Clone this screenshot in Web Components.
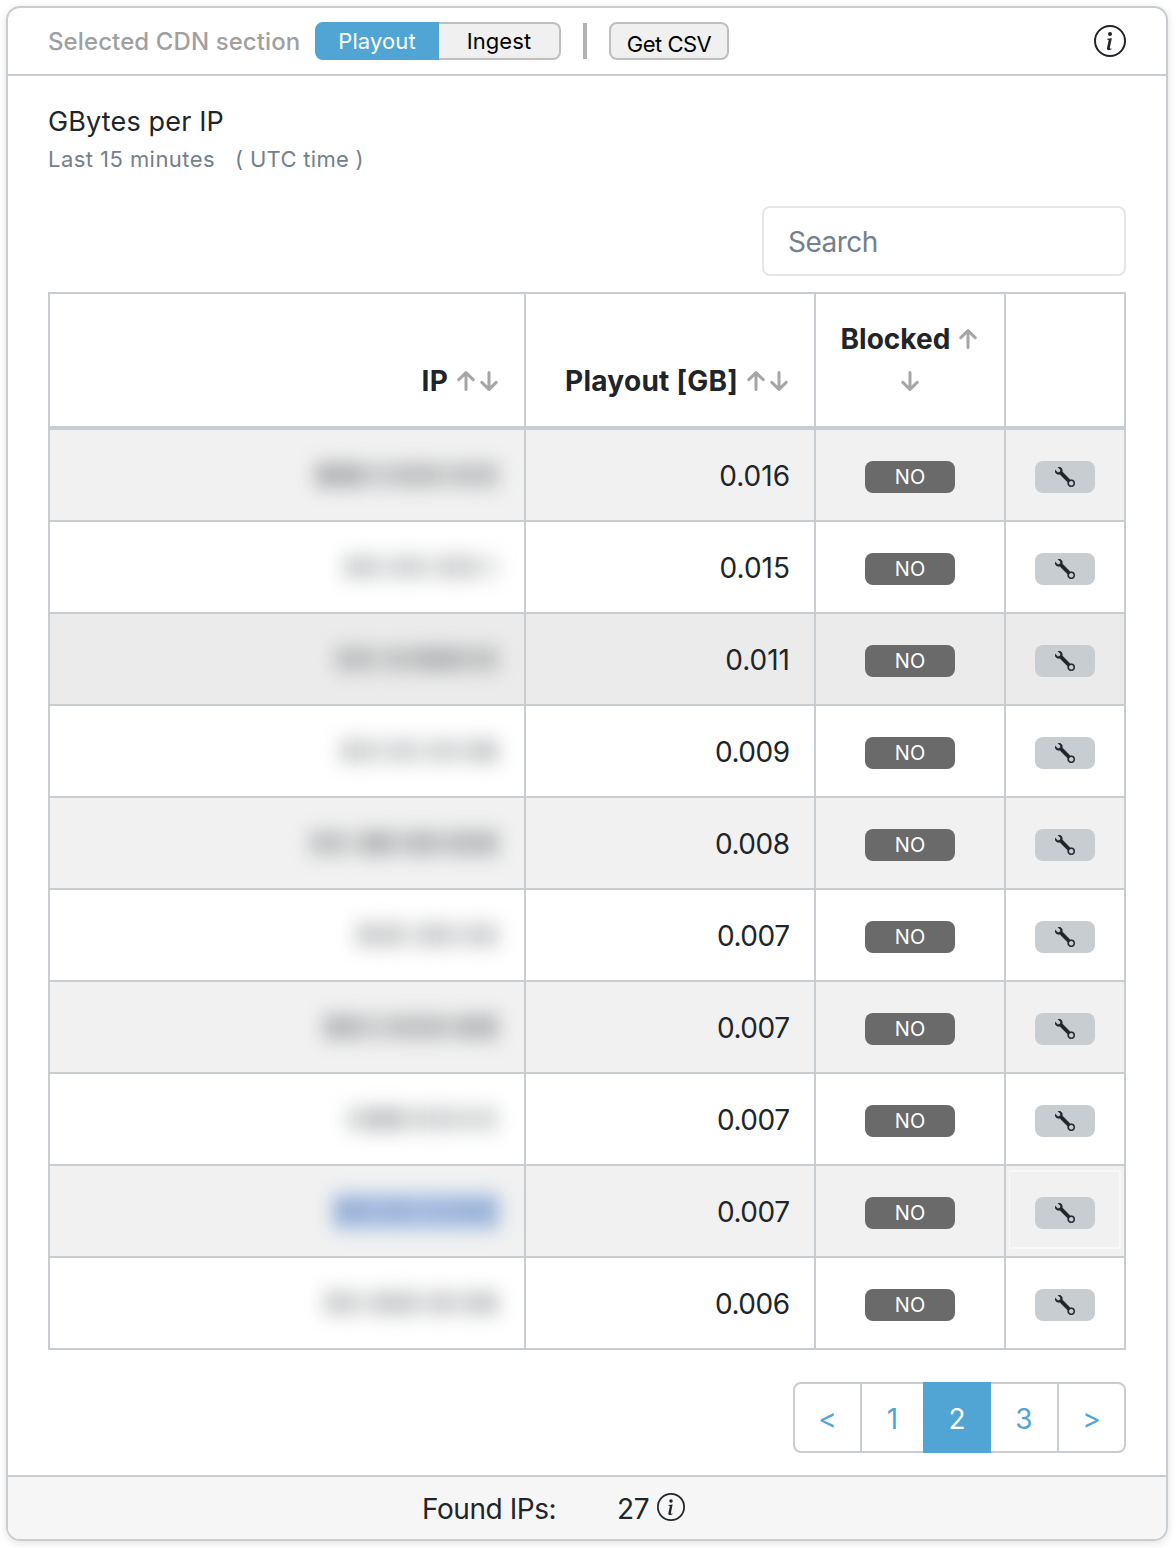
<!DOCTYPE html>
<html lang="en">
<head>
<meta charset="utf-8">
<title>GBytes per IP</title>
<style>
    body {
        margin: 0;
        padding: 6px 8px 7px 6px;
        background: #fff;
        color: #212529;
        font-family: Inter, "Liberation Sans", sans-serif;
        font-size: 28px;
        line-height: 42px;
    }
</style>
</head>
<body>
<cdn-card>
    <cdn-toolbar slot="header" label="Selected CDN section"></cdn-toolbar>
    <card-title caption="GBytes per IP">
        <span>Last 15 minutes</span>
        <span>( UTC time )</span>
    </card-title>
    <search-box placeholder="Search"></search-box>
    <ip-table></ip-table>
    <page-list current="2" pages="3"></page-list>
    <found-count slot="footer" label="Found IPs:" value="27"></found-count>
</cdn-card>

<script>
function define(name, html, setup) {
    const template = document.createElement('template');
    template.innerHTML = html;
    customElements.define(name, class extends HTMLElement {
        constructor () {
            super();
            this._shadowRoot = this.attachShadow({ mode: 'open' });
            this._shadowRoot.appendChild(template.content.cloneNode(true));
        }

        connectedCallback () {
            if (setup) setup(this, this._shadowRoot);
        }
    });
}

// icons

define('info-icon', `
    <style>
        :host { display: block; width: 32px; height: 32px; }
        svg { display: block; width: 100%; height: 100%; }
    </style>
    <svg viewBox="0 0 16 16" fill="currentColor">
        <circle cx="8" cy="8" r="7.5" fill="none" stroke="currentColor"/>
        <path d="M8.93 6.588l-2.29.287-.082.38.45.083c.294.07.352.176.288.469l-.738 3.468c-.194.897.105 1.319.808 1.319.545 0 1.178-.252 1.465-.598l.088-.416c-.2.176-.492.246-.686.246-.275 0-.375-.193-.304-.533L8.93 6.588z"/>
        <circle cx="8" cy="4.5" r="1"/>
    </svg>
`);

define('wrench-icon', `
    <style>
        :host { display: block; width: 20px; height: 20px; }
        svg { display: block; width: 100%; height: 100%; }
    </style>
    <svg viewBox="0 0 16 16" fill="currentColor" stroke="currentColor" stroke-width=".2">
        <path fill-rule="evenodd" d="M.102 2.223A3.004 3.004 0 0 0 3.78 5.897l6.341 6.252A3.003 3.003 0 0 0 13 16a3 3 0 1 0-.851-5.878L5.897 3.781A3.004 3.004 0 0 0 2.223.1l2.141 2.142L4 4l-1.757.364L.102 2.223zm13.37 9.019.528.026.287.445.445.287.026.529L15 13l-.242.471-.026.529-.445.287-.287.445-.529.026L13 15l-.471-.242-.529-.026-.287-.445-.445-.287-.026-.529L11 13l.242-.471.026-.529.445-.287.287-.445.529-.026L13 11l.471.242z"/>
    </svg>
`);

define('sort-arrow', `
    <style>
        :host { display: inline-block; width: 22.5px; height: 20px; color: #a6a6a6; }
        :host([down]) svg { transform: rotate(180deg); }
        svg { display: block; margin: 0 auto; width: 18px; height: 20px; }
    </style>
    <svg viewBox="0 0 18 20" fill="none" stroke="currentColor" stroke-width="3" stroke-linecap="round" stroke-linejoin="round">
        <path d="M9 18.5V2M1.8 8.7L9 1.7l7.2 7"/>
    </svg>
`);

// card

define('cdn-card', `
    <style>
        :host {
            display: flex;
            flex-direction: column;
            box-sizing: border-box;
            height: 1535px;
            border: 2px solid #c8cdd1;
            border-radius: 14px;
            box-shadow: 0 2px 8px rgba(0, 0, 0, .12);
            overflow: hidden;
        }
        header { height: 66px; border-bottom: 2px solid #c8cdd1; }
        main { flex: 1; display: flex; flex-direction: column; padding: 25px 40px 0; }
        footer { height: 62px; border-top: 2px solid #c8cdd1; background: #f6f6f6; }
    </style>
    <header><slot name="header"></slot></header>
    <main><slot></slot></main>
    <footer><slot name="footer"></slot></footer>
`);

define('cdn-toolbar', `
    <style>
        :host {
            display: flex;
            align-items: center;
            height: 66px;
            padding: 0 40px;
            font-size: 22px;
            line-height: 34px;
            letter-spacing: .1px;
        }
        .label { width: 267px; padding-top: 1px; color: #a0a0a0; font-size: 24px; font-weight: 500; white-space: nowrap; }
        button {
            box-sizing: border-box;
            height: 38px;
            padding: 0;
            border: 2px solid #bebebe;
            background: #f0f0f0;
            color: #000;
            font: inherit;
            letter-spacing: inherit;
        }
        .playout { width: 124px; border-color: #51a5d4; border-radius: 8px 0 0 8px; background: #51a5d4; color: #fff; }
        .ingest { width: 122px; border-left: 0; border-radius: 0 8px 8px 0; }
        .bar { width: 4px; height: 36px; margin: 0 22px; background: #b3b3b3; }
        .csv { width: 120px; border-radius: 8px; padding-top: 3px; letter-spacing: -.5px; }
        info-icon { margin-left: auto; }
    </style>
    <span class="label"></span>
    <button class="playout">Playout</button>
    <button class="ingest">Ingest</button>
    <span class="bar"></span>
    <button class="csv">Get CSV</button>
    <info-icon></info-icon>
`, (host, root) => {
    root.querySelector('.label').textContent = host.getAttribute('label');
});

define('card-title', `
    <style>
        :host { display: block; height: 105px; }
        h4 { margin: 0; font-size: 27px; font-weight: 400; line-height: 41px; letter-spacing: .15px; }
        p { display: flex; gap: 20px; margin: 0; color: #74808c; font-size: 22px; line-height: 34px; letter-spacing: .45px; }
        ::slotted(:last-child) { letter-spacing: .3px; }
    </style>
    <h4></h4>
    <p><slot></slot></p>
`, (host, root) => {
    root.querySelector('h4').textContent = host.getAttribute('caption');
});

define('search-box', `
    <style>
        :host {
            display: block;
            align-self: flex-end;
            box-sizing: border-box;
            width: 364px;
            height: 70px;
            padding: 12.5px 24px 11px;
            border: 2px solid #e4e7ea;
            border-radius: 8px;
            color: #74808c;
            letter-spacing: -.5px;
        }
    </style>
    <span></span>
`, (host, root) => {
    root.querySelector('span').textContent = host.getAttribute('placeholder');
});

// table

define('state-badge', `
    <style>
        :host {
            display: block;
            width: 90px;
            height: 32px;
            border-radius: 8px;
            background: #6a6a6a;
            color: #fff;
            font-size: 20px;
            line-height: 33px;
            text-align: center;
        }
    </style>
    <slot></slot>
`);

define('tool-button', `
    <style>
        :host {
            display: flex;
            align-items: center;
            justify-content: center;
            width: 60px;
            height: 32px;
            border-radius: 8px;
            background: #c8cdd1;
        }
    </style>
    <wrench-icon></wrench-icon>
`);

// Address that is kept unreadable: soft blobs, each is [width, opacity].
define('hidden-ip', `
    <style>
        :host { display: flex; height: 26px; filter: blur(9px); color: #5c6266; }
        :host([selected]) { height: 37px; background: #b4caea; color: #5f7cac; align-items: center; }
        i { height: 26px; background: currentColor; }
    </style>
`, (host, root) => {
    JSON.parse(host.getAttribute('blobs')).forEach(([width, opacity]) => {
        const $blob = document.createElement('i');
        $blob.style.width = width + 'px';
        $blob.style.opacity = opacity;
        root.appendChild($blob);
    });
});

const rows = [
    { gb: '0.016', blobs: [[46, .4], [36, .25], [42, .32], [14, .22], [46, .3]] },
    { gb: '0.015', blobs: [[34, .27], [14, .16], [34, .25], [14, .16], [38, .26], [22, .14]] },
    { gb: '0.011', blobs: [[38, .3], [14, .18], [34, .28], [34, .36], [44, .28]], hover: true },
    { gb: '0.009', blobs: [[36, .26], [12, .16], [30, .24], [12, .16], [30, .24], [10, .16], [30, .3]] },
    { gb: '0.008', blobs: [[36, .3], [16, .16], [32, .38], [12, .2], [34, .34], [10, .22], [50, .34]] },
    { gb: '0.007', blobs: [[50, .28], [12, .12], [36, .28], [12, .16], [34, .26]] },
    { gb: '0.007', blobs: [[36, .36], [34, .24], [54, .32], [10, .2], [42, .36]] },
    { gb: '0.007', blobs: [[20, .22], [38, .34], [12, .2], [36, .25], [48, .22]] },
    { gb: '0.007', blobs: [[36, .3], [10, .15], [34, .26], [10, .15], [34, .22], [42, .28]], selected: true },
    { gb: '0.006', blobs: [[34, .28], [16, .16], [44, .3], [12, .16], [26, .28], [10, .16], [34, .3]] }
];

define('ip-table', `
    <style>
        :host {
            display: block;
            margin-top: 16px;
            border: solid #c8cdd1;
            border-width: 2px 0 0 2px;
        }
        .row { display: grid; grid-template-columns: 476px 290px 190px 120px; height: 92px; }
        .row > div {
            display: flex;
            align-items: center;
            justify-content: flex-end;
            box-sizing: border-box;
            border: solid #c8cdd1;
            border-width: 0 2px 2px 0;
            padding: 0 24px;
        }
        .row > div:nth-child(n + 3) { justify-content: center; padding-top: 4px; }
        .row > .gb { padding-top: 2px; }
        .row > .small { padding-right: 24.5px; letter-spacing: -.5px; }
        .head.row { height: 136px; font-weight: 700; }
        .head.row > div { align-items: flex-end; padding: 24px; border-bottom-width: 4px; }
        .head.row > .blocked { padding: 24px 20px; text-align: center; }
        .wide { letter-spacing: .25px; }
        .odd { background: #f1f1f1; }
        .hover { background: #ebebeb; }
        .odd .focus { box-shadow: inset 3px 4px #f1f1f1, inset -3px -7px #f1f1f1, inset 4px 6px #f8f8f8, inset -5px -9px #f8f8f8; }
        hidden-ip { margin-right: 1px; }
    </style>
    <div class="head row">
        <div><span class="wide">IP <sort-arrow></sort-arrow><sort-arrow down></sort-arrow></span></div>
        <div><span class="wide">Playout [GB] <sort-arrow></sort-arrow><sort-arrow down></sort-arrow></span></div>
        <div class="blocked"><span>Blocked <sort-arrow></sort-arrow><sort-arrow down></sort-arrow></span></div>
        <div></div>
    </div>
`, (host, root) => {
    rows.forEach((row, index) => {
        const $row = document.createElement('div');
        $row.className = 'row' + (index % 2 ? '' : ' odd') + (row.hover ? ' hover' : '');
        $row.innerHTML = `
            <div><hidden-ip blobs="${JSON.stringify(row.blobs)}" ${row.selected ? 'selected' : ''}></hidden-ip></div>
            <div class="gb ${row.gb < 0.01 ? 'small' : ''}">${row.gb}</div>
            <div><state-badge>NO</state-badge></div>
            <div class="${row.selected ? 'focus' : ''}"><tool-button></tool-button></div>
        `;
        root.appendChild($row);
    });
});

// pagination and footer

define('page-list', `
    <style>
        :host { display: flex; align-self: flex-end; margin-top: 32px; color: #51a5d4; }
        a {
            box-sizing: border-box;
            width: 69px;
            height: 71px;
            margin-left: -2px;
            border: 2px solid #c8cdd1;
            line-height: 70px;
            text-align: center;
        }
        a:first-of-type { margin-left: 0; border-radius: 8px 0 0 8px; }
        a:nth-of-type(2) { width: 65px; }
        a:nth-of-type(4) { width: 70px; }
        a:last-of-type { border-radius: 0 8px 8px 0; }
        a.active { position: relative; width: 68px; border-color: #51a5d4; background: #51a5d4; color: #fff; }
    </style>
`, (host, root) => {
    const labels = ['<'];
    for (let page = 1; page <= Number(host.getAttribute('pages')); page++) {
        labels.push(String(page));
    }
    labels.push('>');
    labels.forEach((label) => {
        const $link = document.createElement('a');
        $link.textContent = label;
        if (label === host.getAttribute('current')) $link.className = 'active';
        root.appendChild($link);
    });
});

define('found-count', `
    <style>
        :host { display: flex; align-items: center; height: 62px; padding-left: 414px; letter-spacing: -.45px; }
        span { padding-top: 1px; }
        .label { width: 195px; }
        .value { width: 40px; }
        info-icon { width: 28px; height: 28px; margin-bottom: 2px; }
    </style>
    <span class="label"></span>
    <span class="value"></span>
    <info-icon></info-icon>
`, (host, root) => {
    root.querySelector('.label').textContent = host.getAttribute('label');
    root.querySelector('.value').textContent = host.getAttribute('value');
});
</script>
</body>
</html>
